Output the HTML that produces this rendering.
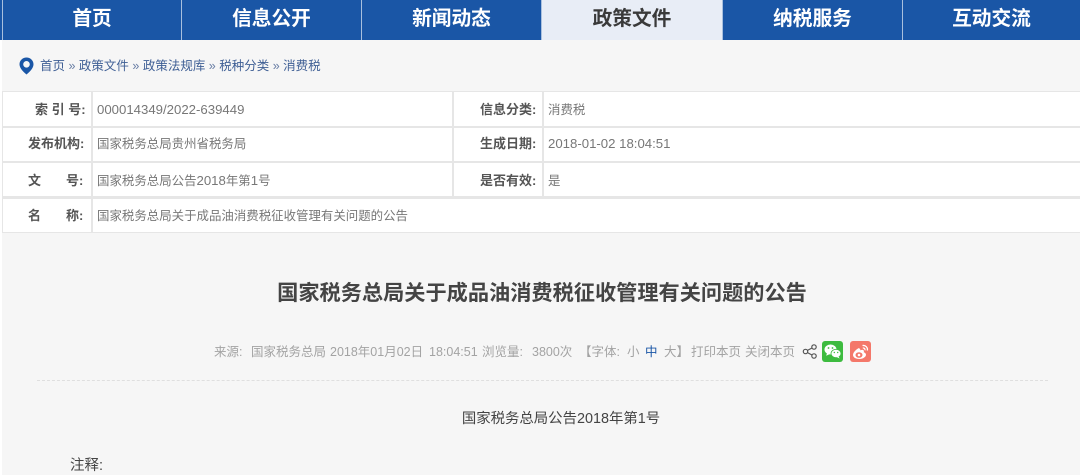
<!DOCTYPE html>
<html lang="zh"><head><meta charset="utf-8"><title>公告</title>
<style>
html,body{margin:0;padding:0}
body{width:1080px;height:475px;overflow:hidden;background:#f6f6f6;position:relative;font-family:"Liberation Sans","Microsoft YaHei","Noto Sans CJK SC",sans-serif}
.a{position:absolute;white-space:nowrap}
.nav{position:absolute;top:0;height:40px;background:#1a56a6;color:#fff;font-size:19.700px;font-weight:bold;line-height:38px;text-align:center;box-sizing:border-box;border-right:1px solid #a9c0de}
.nav.on{background:#e8edf6;color:#3a3a3a}
.crumb{left:40px;top:58px;font-size:12.500px;line-height:16px;color:#3f5f95}
.crumb i{font-style:normal;color:#6a7fa6}
.box{position:absolute;background:#fff}
.l{position:absolute;font-size:13px;font-weight:bold;color:#555;line-height:16px;white-space:pre}
.v{position:absolute;font-size:12.450px;color:#777;line-height:16px;white-space:nowrap}
.v b{font-weight:normal;font-size:13.200px}
.m{position:absolute;top:344px;font-size:12.500px;line-height:16px;color:#a3a3a3;white-space:nowrap}
</style></head><body>
<div class="a" style="left:0;top:0;width:2px;height:475px;background:#fff"></div>
<div class="nav" style="left:3px;width:179px">首页</div>
<div class="nav" style="left:182px;width:180px">信息公开</div>
<div class="nav" style="left:362px;width:180px">新闻动态</div>
<div class="nav on" style="left:542px;width:181px">政策文件</div>
<div class="nav" style="left:723px;width:180px">纳税服务</div>
<div class="nav" style="left:903px;width:177px;border-right:0">互动交流</div>
<div class="a" style="left:0;top:0;width:3px;height:40px;background:#1a56a6"></div>
<div class="a" style="left:2px;top:0;width:1px;height:40px;background:#a9c0de"></div>

<svg class="a" style="left:19px;top:57px" width="15" height="18" viewBox="0 0 15 18"><path fill-rule="evenodd" fill="#1a56a6" d="M7.500 0.500C3.600 0.500 0.500 3.500 0.500 7.300c0 4.400 4.600 8.200 7 10.200 2.400-2 7-5.800 7-10.200C14.500 3.500 11.400 0.500 7.500 0.500zM7.500 4a3.300 3.300 0 1 1 0 6.600 3.300 3.300 0 0 1 0-6.600z"/></svg>
<div class="a crumb">首页 <i>»</i> 政策文件 <i>»</i> 政策法规库 <i>»</i> 税种分类 <i>»</i> 消费税</div>

<div class="a" style="left:2px;top:91px;width:1078px;height:142px;background:#e6e6e6"></div>
<div class="box" style="left:3px;top:92px;width:88px;height:33.500px"></div>
<div class="box" style="left:93px;top:92px;width:359px;height:33.500px"></div>
<div class="box" style="left:454px;top:92px;width:88px;height:33.500px"></div>
<div class="box" style="left:544px;top:92px;width:536px;height:33.500px"></div>
<div class="box" style="left:3px;top:128px;width:88px;height:33px"></div>
<div class="box" style="left:93px;top:128px;width:359px;height:33px"></div>
<div class="box" style="left:454px;top:128px;width:88px;height:33px"></div>
<div class="box" style="left:544px;top:128px;width:536px;height:33px"></div>
<div class="box" style="left:3px;top:163px;width:88px;height:33px"></div>
<div class="box" style="left:93px;top:163px;width:359px;height:33px"></div>
<div class="box" style="left:454px;top:163px;width:88px;height:33px"></div>
<div class="box" style="left:544px;top:163px;width:536px;height:33px"></div>
<div class="box" style="left:3px;top:199px;width:88px;height:33px"></div>
<div class="box" style="left:93px;top:199px;width:987px;height:33px"></div>

<div class="l" style="left:35px;top:102px">索 引 号:</div>
<div class="v" style="left:97px;top:102px"><b>000014349/2022-639449</b></div>
<div class="l" style="left:480px;top:102px">信息分类:</div>
<div class="v" style="left:548px;top:102px">消费税</div>
<div class="l" style="left:28px;top:136px">发布机构:</div>
<div class="v" style="left:97px;top:136px">国家税务总局贵州省税务局</div>
<div class="l" style="left:480px;top:136px">生成日期:</div>
<div class="v" style="left:548px;top:136px"><b>2018-01-02 18:04:51</b></div>
<div class="l" style="left:28px;top:173px">文</div>
<div class="l" style="left:66px;top:173px">号:</div>
<div class="v" style="left:97px;top:173px">国家税务总局公告<b>2018</b>年第<b>1</b>号</div>
<div class="l" style="left:480px;top:173px">是否有效:</div>
<div class="v" style="left:548px;top:173px">是</div>
<div class="l" style="left:28px;top:208px">名</div>
<div class="l" style="left:66px;top:208px">称:</div>
<div class="v" style="left:97px;top:208px">国家税务总局关于成品油消费税征收管理有关问题的公告</div>

<div class="a" style="left:0;width:1084px;top:281px;text-align:center;font-size:21.200px;font-weight:bold;line-height:26px;color:#444">国家税务总局关于成品油消费税征收管理有关问题的公告</div>

<div class="m" style="left:214px">来源:</div>
<div class="m" style="left:251px">国家税务总局</div>
<div class="m" style="left:330px">2018年01月02日</div>
<div class="m" style="left:429px">18:04:51</div>
<div class="m" style="left:482px">浏览量:</div>
<div class="m" style="left:532px">3800次</div>
<div class="m" style="left:579px">【字体:</div>
<div class="m" style="left:627px">小</div>
<div class="m" style="left:645px;color:#1a56a6">中</div>
<div class="m" style="left:664px">大】</div>
<div class="m" style="left:691px">打印本页</div>
<div class="m" style="left:745px">关闭本页</div>
<svg class="a" style="left:802px;top:344px" width="16" height="15" viewBox="0 0 16 15" fill="none" stroke="#555" stroke-width="1.200"><circle cx="3.500" cy="7.500" r="2.200"/><circle cx="12" cy="3" r="2.200"/><circle cx="12" cy="12" r="2.200"/><path d="M5.500 6.400 10 4M5.500 8.600 10 11"/></svg>
<div class="a" style="left:822px;top:341px;width:21px;height:21px;border-radius:3px;background:#3dbb3f"></div>
<svg class="a" style="left:822px;top:341px" width="21" height="21" viewBox="0 0 21 21" fill="#fff"><ellipse cx="8.500" cy="8.500" rx="6" ry="5"/><path d="M5 12l-.8 2.800L8 13z"/><ellipse cx="14" cy="12.500" rx="5" ry="4.200" stroke="#3dbb3f" stroke-width=".8"/><path d="M16.500 15.500l1.200 2-3.200-1.500z"/><circle cx="6.500" cy="7" r=".9" fill="#3dbb3f"/><circle cx="10.500" cy="7" r=".9" fill="#3dbb3f"/><circle cx="12.300" cy="11.500" r=".7" fill="#3dbb3f"/><circle cx="15.700" cy="11.500" r=".7" fill="#3dbb3f"/></svg>
<div class="a" style="left:850px;top:341px;width:21px;height:21px;border-radius:3px;background:#f4786a"></div>
<svg class="a" style="left:850px;top:341px" width="21" height="21" viewBox="0 0 21 21" fill="none"><path fill="#fff" d="M9 7c-2.500 1-6 4.300-6 7 0 2.500 3 4 6.500 4s6.500-2 6.500-4.200c0-1.600-1.500-2.200-2.300-2.500.5-1.200.3-2.500-1.700-2.400-1 .1-1.800.5-1.800.5s.5-2-1.200-2z"/><ellipse cx="9" cy="14" rx="3.500" ry="2.800" fill="#f4786a"/><circle cx="9" cy="14" r="1.300" fill="#fff"/><path stroke="#fff" stroke-width="1.300" d="M12.500 4.500c3-.5 5.500 2 4.800 5M12.800 7c1.500-.2 2.500 1 2.200 2.300"/></svg>

<div class="a" style="left:37px;top:380px;width:1011px;border-top:1px dashed #dfdfdf"></div>

<div class="a" style="left:0;width:1122px;top:410px;text-align:center;font-size:14.400px;line-height:18px;color:#444">国家税务总局公告2018年第1号</div>
<div class="a" style="left:70px;top:457px;font-size:14.500px;line-height:18px;color:#444">注释:</div>
</body></html>
